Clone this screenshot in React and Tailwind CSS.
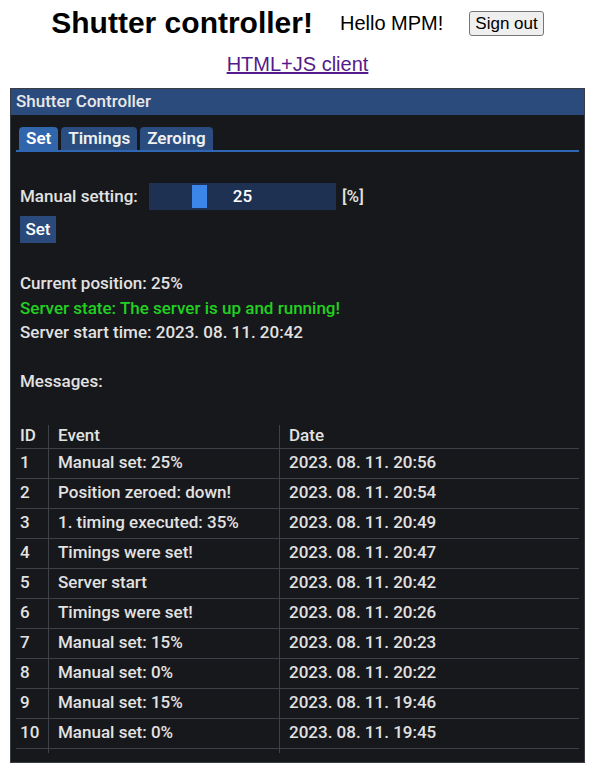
import React from 'react';

const messages = [
    { id: 1, event: 'Manual set: 25%', date: '2023. 08. 11. 20:56' },
    { id: 2, event: 'Position zeroed: down!', date: '2023. 08. 11. 20:54' },
    { id: 3, event: '1. timing executed: 35%', date: '2023. 08. 11. 20:49' },
    { id: 4, event: 'Timings were set!', date: '2023. 08. 11. 20:47' },
    { id: 5, event: 'Server start', date: '2023. 08. 11. 20:42' },
    { id: 6, event: 'Timings were set!', date: '2023. 08. 11. 20:26' },
    { id: 7, event: 'Manual set: 15%', date: '2023. 08. 11. 20:23' },
    { id: 8, event: 'Manual set: 0%', date: '2023. 08. 11. 20:22' },
    { id: 9, event: 'Manual set: 15%', date: '2023. 08. 11. 19:46' },
    { id: 10, event: 'Manual set: 0%', date: '2023. 08. 11. 19:45' },
];

const tabs = ['Set', 'Timings', 'Zeroing'];

const App = () => {
    const value = 25;

    return (
        <div className="min-h-screen bg-white text-black font-['Liberation_Sans',Arial,sans-serif] pb-[10px]">
            {/* Page header */}
            <div className="h-[46px] flex items-center justify-center">
                <h1 className="text-[30px] font-bold leading-none mr-[27px]">Shutter controller!</h1>
                <span className="text-[20px] leading-none mr-[26px]">Hello MPM!</span>
                <button className="h-[25px] px-[5px] text-[17px] leading-none bg-[#efefef] border border-[#767676] rounded-[3px]">
                    Sign out
                </button>
            </div>
            <div className="h-[36px] flex items-center justify-center">
                <a href="#" className="text-[20px] leading-none text-[#551a8b] underline">HTML+JS client</a>
            </div>

            {/* Controller panel */}
            <div className="mx-[10px] mt-[6px] border border-[#3b3d44] bg-[#17181b] text-[#e2e2e2] font-['Roboto',sans-serif] text-[17px] font-medium">
                <div className="h-[26px] bg-[#2c4b7d] flex items-center pl-[5px] text-[#e8e8e8]">
                    Shutter Controller
                </div>

                <div className="px-[5px] pt-[12px] pb-[9px]">
                    {/* Tabs */}
                    <div className="flex items-end gap-[3px] pl-[3px] border-b-2 border-[#2f67b4]">
                        {tabs.map((t, i) => (
                            <div
                                key={t}
                                className={
                                    i === 0
                                        ? 'h-[23px] px-[7px] flex items-center rounded-t-[4px] bg-[#3166ad] text-white font-semibold'
                                        : 'h-[23px] px-[7px] flex items-center rounded-t-[4px] bg-[#2a4c7f] text-[#f0f0f0] font-semibold'
                                }
                            >
                                {t}
                            </div>
                        ))}
                    </div>

                    <div className="pl-[4px]">
                        {/* Manual setting */}
                        <div className="mt-[31px] flex items-center">
                            <span className="w-[129px]">Manual setting:</span>
                            <div className="relative w-[187px] h-[27px] bg-[#1f3152] flex items-center justify-center">
                                <div
                                    className="absolute top-[2px] bottom-[2px] w-[15px] bg-[#3b86e8]"
                                    style={{ left: `${(value / 100) * (187 - 15)}px` }}
                                />
                                <span className="relative text-white">{value}</span>
                            </div>
                            <span className="ml-[6px]">[%]</span>
                        </div>
                        <button className="mt-[6px] h-[27px] w-[36px] bg-[#2a4a7c] text-white">Set</button>

                        {/* Status */}
                        <div className="mt-[28px] leading-[24.5px]">
                            <div>Current position: 25%</div>
                            <div className="text-[#21d021]">Server state: The server is up and running!</div>
                            <div>Server start time: 2023. 08. 11. 20:42</div>
                            <div>&nbsp;</div>
                            <div>Messages:</div>
                        </div>
                    </div>

                    {/* Messages table */}
                    <div className="mt-[24px]">
                        <div className="grid grid-cols-[32px_231px_1fr] h-[31px] pt-[7px] border-b border-[#3f4148]">
                            <div className="pl-[4px] leading-[20px]">ID</div>
                            <div className="pl-[9px] leading-[20px] border-l border-[#3f4148]">Event</div>
                            <div className="pl-[9px] leading-[20px] border-l border-[#3f4148]">Date</div>
                        </div>
                        {messages.map((m) => (
                            <div key={m.id} className="grid grid-cols-[32px_231px_1fr] h-[30px] border-b border-[#3f4148]">
                                <div className="pl-[4px] flex items-center">{m.id}</div>
                                <div className="pl-[9px] flex items-center border-l border-[#3f4148]">{m.event}</div>
                                <div className="pl-[9px] flex items-center border-l border-[#3f4148]">{m.date}</div>
                            </div>
                        ))}
                        <div className="grid grid-cols-[32px_231px_1fr] h-[4px]">
                            <div />
                            <div className="border-l border-[#3f4148]" />
                            <div className="border-l border-[#3f4148]" />
                        </div>
                    </div>
                </div>
            </div>
        </div>
    );
};

export default App;
